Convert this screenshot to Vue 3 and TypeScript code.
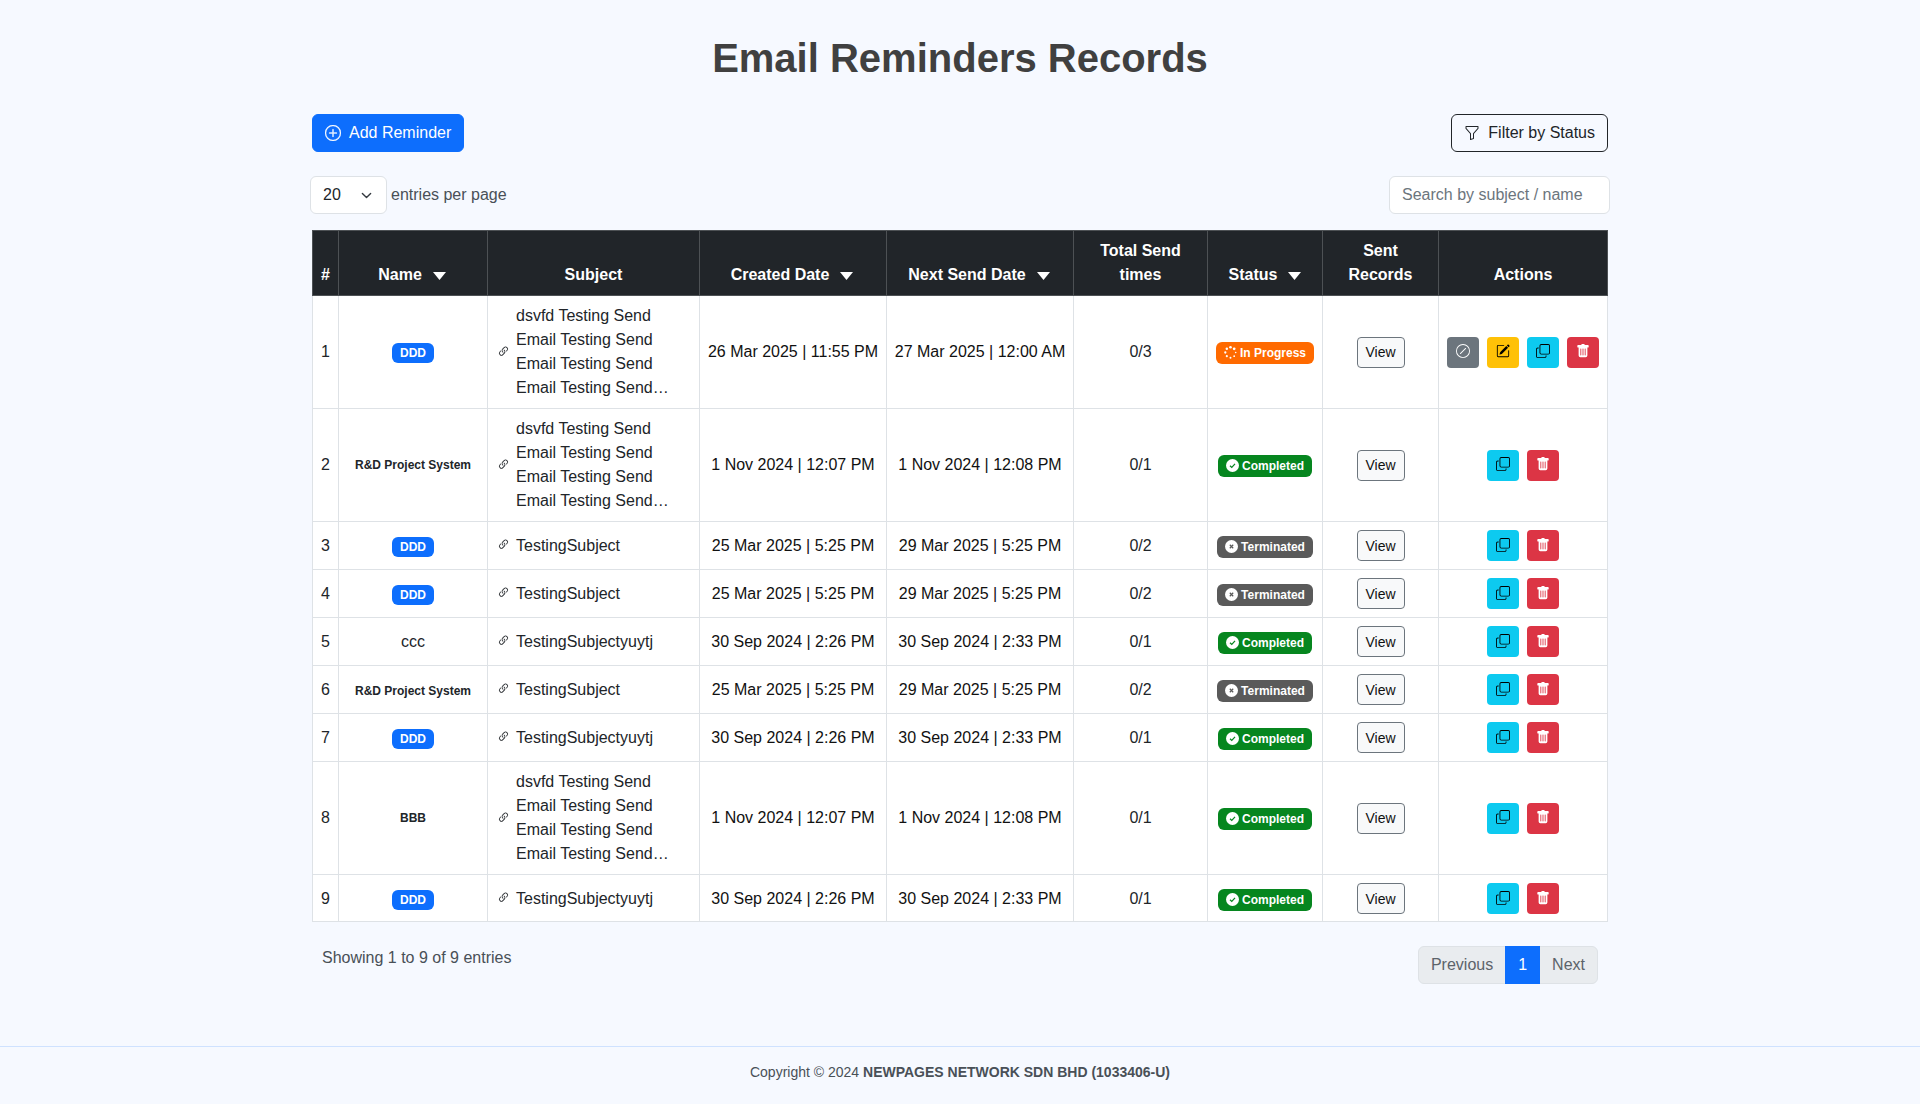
<script setup lang="ts">
type Status = 'progress' | 'completed' | 'terminated'
type NameKind = 'badge' | 'bold' | 'plain'

interface ReminderRow {
  id: number
  name: string
  nameKind: NameKind
  subject: string
  created: string
  next: string
  sent: string
  status: Status
}

const longSubject = 'dsvfd Testing Send Email Testing Send Email Testing Send Email Testing Send…'

const rows: ReminderRow[] = [
  { id: 1, name: 'DDD', nameKind: 'badge', subject: longSubject, created: '26 Mar 2025 | 11:55 PM', next: '27 Mar 2025 | 12:00 AM', sent: '0/3', status: 'progress' },
  { id: 2, name: 'R&D Project System', nameKind: 'bold', subject: longSubject, created: '1 Nov 2024 | 12:07 PM', next: '1 Nov 2024 | 12:08 PM', sent: '0/1', status: 'completed' },
  { id: 3, name: 'DDD', nameKind: 'badge', subject: 'TestingSubject', created: '25 Mar 2025 | 5:25 PM', next: '29 Mar 2025 | 5:25 PM', sent: '0/2', status: 'terminated' },
  { id: 4, name: 'DDD', nameKind: 'badge', subject: 'TestingSubject', created: '25 Mar 2025 | 5:25 PM', next: '29 Mar 2025 | 5:25 PM', sent: '0/2', status: 'terminated' },
  { id: 5, name: 'ccc', nameKind: 'plain', subject: 'TestingSubjectyuytj', created: '30 Sep 2024 | 2:26 PM', next: '30 Sep 2024 | 2:33 PM', sent: '0/1', status: 'completed' },
  { id: 6, name: 'R&D Project System', nameKind: 'bold', subject: 'TestingSubject', created: '25 Mar 2025 | 5:25 PM', next: '29 Mar 2025 | 5:25 PM', sent: '0/2', status: 'terminated' },
  { id: 7, name: 'DDD', nameKind: 'badge', subject: 'TestingSubjectyuytj', created: '30 Sep 2024 | 2:26 PM', next: '30 Sep 2024 | 2:33 PM', sent: '0/1', status: 'completed' },
  { id: 8, name: 'BBB', nameKind: 'bold', subject: longSubject, created: '1 Nov 2024 | 12:07 PM', next: '1 Nov 2024 | 12:08 PM', sent: '0/1', status: 'completed' },
  { id: 9, name: 'DDD', nameKind: 'badge', subject: 'TestingSubjectyuytj', created: '30 Sep 2024 | 2:26 PM', next: '30 Sep 2024 | 2:33 PM', sent: '0/1', status: 'completed' },
]

const statusLabels: Record<Status, string> = {
  progress: 'In Progress',
  completed: 'Completed',
  terminated: 'Terminated',
}

const spinnerDots = [0, 1, 2, 3, 4, 5, 6, 7].map((i) => ({
  cx: 8 + 6.4 * Math.cos((i * Math.PI) / 4),
  cy: 8 + 6.4 * Math.sin((i * Math.PI) / 4),
  r: 1 + i * 0.1,
}))
</script>

<template>
  <div class="page">
    <main class="content">
      <h1 class="title">Email Reminders Records</h1>

      <div class="toolbar">
        <button class="btn btn-add" type="button">
          <svg class="btn-icon" viewBox="0 0 16 16" fill="currentColor" stroke="currentColor" stroke-width="0.3">
            <path d="M8 15A7 7 0 1 1 8 1a7 7 0 0 1 0 14m0 1A8 8 0 1 0 8 0a8 8 0 0 0 0 16" />
            <path d="M8 4a.5.5 0 0 1 .5.5v3h3a.5.5 0 0 1 0 1h-3v3a.5.5 0 0 1-1 0v-3h-3a.5.5 0 0 1 0-1h3v-3A.5.5 0 0 1 8 4" />
          </svg>
          Add Reminder
        </button>
        <button class="btn btn-filter" type="button">
          <svg class="btn-icon" viewBox="0 0 16 16" fill="currentColor">
            <path d="M1.5 1.5A.5.5 0 0 1 2 1h12a.5.5 0 0 1 .5.5v2a.5.5 0 0 1-.128.334L10 8.692V13.5a.5.5 0 0 1-.342.474l-3 1A.5.5 0 0 1 6 14.5V8.692L1.628 3.834A.5.5 0 0 1 1.5 3.5zm1 .5v1.308l4.372 4.858A.5.5 0 0 1 7 8.5v5.306l2-.666V8.5a.5.5 0 0 1 .128-.334L13.5 3.308V2z" />
          </svg>
          Filter by Status
        </button>
      </div>

      <div class="table-controls">
        <label class="entries">
          <span class="select-wrap">
            <select class="entries-select">
              <option>20</option>
            </select>
            <svg class="select-chevron" viewBox="0 0 16 16" fill="none" stroke="#343a40" stroke-width="2" stroke-linecap="round" stroke-linejoin="round">
              <path d="m2 5 6 6 6-6" />
            </svg>
          </span>
          entries per page
        </label>
        <input class="search" type="text" placeholder="Search by subject / name" />
      </div>

      <table class="records">
        <colgroup>
          <col style="width: 26px" />
          <col style="width: 149px" />
          <col style="width: 212px" />
          <col style="width: 187px" />
          <col style="width: 187px" />
          <col style="width: 134px" />
          <col style="width: 115px" />
          <col style="width: 116px" />
          <col style="width: 169px" />
        </colgroup>
        <thead>
          <tr>
            <th class="num-head">#</th>
            <th>Name<svg class="sort" viewBox="0 0 13 8"><path d="M0 0h13L6.5 8z" /></svg></th>
            <th>Subject</th>
            <th>Created Date<svg class="sort" viewBox="0 0 13 8"><path d="M0 0h13L6.5 8z" /></svg></th>
            <th>Next Send Date<svg class="sort" viewBox="0 0 13 8"><path d="M0 0h13L6.5 8z" /></svg></th>
            <th>Total Send times</th>
            <th class="status-head">Status<svg class="sort" viewBox="0 0 13 8"><path d="M0 0h13L6.5 8z" /></svg></th>
            <th>Sent Records</th>
            <th>Actions</th>
          </tr>
        </thead>
        <tbody>
          <tr v-for="row in rows" :key="row.id" :class="{ 'row-short': row.subject !== longSubject }">
            <td>{{ row.id }}</td>
            <td>
              <span v-if="row.nameKind === 'badge'" class="name-badge">{{ row.name }}</span>
              <span v-else-if="row.nameKind === 'bold'" class="name-bold">{{ row.name }}</span>
              <template v-else>{{ row.name }}</template>
            </td>
            <td class="subject-cell">
              <div class="subject">
                <svg class="link-icon" viewBox="0 0 16 16" fill="currentColor">
                  <path d="M4.715 6.542 3.343 7.914a3 3 0 1 0 4.243 4.243l1.828-1.829A3 3 0 0 0 8.586 5.5L8 6.086a1 1 0 0 0-.154.199 2 2 0 0 1 .861 3.337L6.88 11.45a2 2 0 1 1-2.83-2.83l.793-.792a4 4 0 0 1-.128-1.287z" />
                  <path d="M6.586 4.672A3 3 0 0 0 7.414 9.5l.775-.776a2 2 0 0 1-.896-3.346L9.12 3.55a2 2 0 1 1 2.83 2.83l-.793.792c.112.42.155.855.128 1.287l1.372-1.372a3 3 0 1 0-4.243-4.243z" />
                </svg>
                <span class="subject-text">{{ row.subject }}</span>
              </div>
            </td>
            <td class="date">{{ row.created }}</td>
            <td class="date">{{ row.next }}</td>
            <td class="sent">{{ row.sent }}</td>
            <td>
              <span class="status" :class="`status-${row.status}`">
                <svg v-if="row.status === 'progress'" class="status-icon" viewBox="0 0 16 16" fill="currentColor">
                  <circle v-for="(dot, i) in spinnerDots" :key="i" :cx="dot.cx" :cy="dot.cy" :r="dot.r" />
                </svg>
                <svg v-else-if="row.status === 'completed'" class="status-icon" viewBox="0 0 16 16">
                  <circle cx="8" cy="8" r="8" fill="#fff" />
                  <path d="M4.9 8.3 7.1 10.4 11.1 6" fill="none" stroke="#06861f" stroke-width="1.5" />
                </svg>
                <svg v-else class="status-icon" viewBox="0 0 16 16">
                  <circle cx="8" cy="8" r="8" fill="#fff" />
                  <path d="M5.9 5.9 10.1 10.1M10.1 5.9 5.9 10.1" fill="none" stroke="#5a5a5a" stroke-width="1.5" />
                </svg>
                <span class="status-label">{{ statusLabels[row.status] }}</span>
              </span>
            </td>
            <td><button class="view-btn" type="button">View</button></td>
            <td>
              <div class="actions">
                <template v-if="row.status === 'progress'">
                  <button class="action action-stop" type="button">
                    <svg viewBox="0 0 16 16" fill="currentColor">
                      <path d="M8 15A7 7 0 1 1 8 1a7 7 0 0 1 0 14m0 1A8 8 0 1 0 8 0a8 8 0 0 0 0 16" />
                      <path d="M11.354 4.646a.5.5 0 0 0-.708 0l-6 6a.5.5 0 0 0 .708.708l6-6a.5.5 0 0 0 0-.708" />
                    </svg>
                  </button>
                  <button class="action action-edit" type="button">
                    <svg viewBox="0 0 16 16" fill="currentColor">
                      <path d="M15.502 1.94a.5.5 0 0 1 0 .706L14.459 3.69l-2-2L13.502.646a.5.5 0 0 1 .707 0l1.293 1.293zm-1.75 2.456-2-2L4.939 9.21a.5.5 0 0 0-.121.196l-.805 2.414a.25.25 0 0 0 .316.316l2.414-.805a.5.5 0 0 0 .196-.12l6.813-6.814z" />
                      <path d="M1 13.5A1.5 1.5 0 0 0 2.5 15h11a1.5 1.5 0 0 0 1.5-1.5v-6a.5.5 0 0 0-1 0v6a.5.5 0 0 1-.5.5h-11a.5.5 0 0 1-.5-.5v-11a.5.5 0 0 1 .5-.5H9a.5.5 0 0 0 0-1H2.5A1.5 1.5 0 0 0 1 2.5z" />
                    </svg>
                  </button>
                </template>
                <button class="action action-copy" type="button">
                  <svg viewBox="0 0 16 16" fill="currentColor">
                    <path fill-rule="evenodd" d="M4 2a2 2 0 0 1 2-2h8a2 2 0 0 1 2 2v8a2 2 0 0 1-2 2H6a2 2 0 0 1-2-2zm2-1a1 1 0 0 0-1 1v8a1 1 0 0 0 1 1h8a1 1 0 0 0 1-1V2a1 1 0 0 0-1-1zM2 5a1 1 0 0 0-1 1v8a1 1 0 0 0 1 1h8a1 1 0 0 0 1-1v-1h1v1a2 2 0 0 1-2 2H2a2 2 0 0 1-2-2V6a2 2 0 0 1 2-2h1v1z" />
                  </svg>
                </button>
                <button class="action action-delete" type="button">
                  <svg viewBox="0 0 16 16" fill="currentColor">
                    <path d="M2.5 1a1 1 0 0 0-1 1v1a1 1 0 0 0 1 1H3v9a2 2 0 0 0 2 2h6a2 2 0 0 0 2-2V4h.5a1 1 0 0 0 1-1V2a1 1 0 0 0-1-1H10a1 1 0 0 0-1-1H7a1 1 0 0 0-1 1zm3 4a.5.5 0 0 1 .5.5v7a.5.5 0 0 1-1 0v-7a.5.5 0 0 1 .5-.5M8 5a.5.5 0 0 1 .5.5v7a.5.5 0 0 1-1 0v-7A.5.5 0 0 1 8 5m3 .5v7a.5.5 0 0 1-1 0v-7a.5.5 0 0 1 1 0" />
                  </svg>
                </button>
              </div>
            </td>
          </tr>
        </tbody>
      </table>

      <div class="table-footer">
        <div class="info">Showing 1 to 9 of 9 entries</div>
        <nav class="pagination">
          <a class="page-link page-prev">Previous</a>
          <a class="page-link page-active">1</a>
          <a class="page-link page-next">Next</a>
        </nav>
      </div>
    </main>

    <footer class="footer">
      Copyright © 2024 <strong>NEWPAGES NETWORK SDN BHD (1033406-U)</strong>
    </footer>
  </div>
</template>

<style>
html,
body {
  margin: 0;
  background: #f6f9ff;
}
</style>

<style scoped>
.page {
  display: flex;
  flex-direction: column;
  min-height: 100vh;
  box-sizing: border-box;
  font-family: 'Liberation Sans', Arial, sans-serif;
  font-size: 16px;
  line-height: 24px;
  color: #212529;
}

.content {
  width: 1296px;
  margin: 0 auto;
  padding-top: 34px;
}

.title {
  margin: 0 0 32px;
  font-size: 40px;
  line-height: 48px;
  font-weight: 700;
  text-align: center;
  color: #404040;
}

.toolbar {
  display: flex;
  justify-content: space-between;
  margin-bottom: 24px;
}

.btn {
  display: inline-flex;
  align-items: center;
  height: 38px;
  box-sizing: border-box;
  padding: 0 12px;
  border: 1px solid transparent;
  border-radius: 6px;
  font: inherit;
  cursor: pointer;
}

.btn-icon {
  width: 16px;
  height: 16px;
  margin-right: 8px;
}

.btn-add {
  background: #0d6efd;
  border-color: #0d6efd;
  color: #fff;
}

.btn-filter {
  background: transparent;
  border-color: #212529;
  color: #212529;
}

.table-controls {
  display: flex;
  justify-content: space-between;
  align-items: center;
  margin: 0 -2px 16px -2px;
}

.entries {
  display: flex;
  align-items: center;
  gap: 4px;
  color: #495057;
}

.select-wrap {
  position: relative;
  display: block;
}

.entries-select {
  display: block;
  width: 77px;
  height: 38px;
  box-sizing: border-box;
  padding: 0 12px;
  border: 1px solid #dee2e6;
  border-radius: 6px;
  background: #fff;
  font: inherit;
  color: #212529;
  appearance: none;
}

.select-chevron {
  position: absolute;
  top: 14px;
  right: 15px;
  width: 11px;
  height: 11px;
  pointer-events: none;
}

.search {
  width: 221px;
  height: 38px;
  box-sizing: border-box;
  padding: 0 12px;
  border: 1px solid #dee2e6;
  border-radius: 6px;
  background: #fff;
  font: inherit;
  color: #212529;
}

.search::placeholder {
  color: #6c757d;
  opacity: 1;
}

.records {
  width: 1295px;
  table-layout: fixed;
  border-collapse: collapse;
  background: #fff;
}

.records th,
.records td {
  padding: 8px;
  text-align: center;
}

.records th {
  vertical-align: bottom;
  background: #212529;
  border: 1px solid #4d5154;
  color: #fff;
  font-weight: 700;
}

.records th.num-head {
  padding: 8px 0;
}

.records td {
  vertical-align: middle;
  border: 1px solid #dee2e6;
  color: #212529;
}

.records td:first-child {
  padding: 8px 0;
}

.records .date {
  padding: 8px 0;
  color: #111;
}

.records tbody tr:last-child td {
  padding-bottom: 7px;
}

.sort {
  width: 13px;
  height: 8px;
  margin: 0 2px 0 11px;
  fill: #fff;
}

.status-head .sort {
  margin-right: 0;
}

.name-badge {
  display: inline-block;
  padding: 4px 8px;
  border-radius: 6px;
  background: #0d6efd;
  color: #fff;
  font-size: 12px;
  font-weight: 700;
  line-height: 12px;
  vertical-align: middle;
}

.name-bold {
  display: inline-block;
  font-size: 12px;
  font-weight: 700;
  vertical-align: middle;
}

.row-short .name-badge,
.row-short .name-bold,
.row-short .status {
  margin-top: 2px;
}

.subject {
  display: flex;
  align-items: center;
  gap: 6px;
  text-align: left;
}

.records .subject-cell {
  padding: 8px 8px 8px 9px;
}

.link-icon {
  flex: none;
  width: 13px;
  height: 13px;
  margin-top: -2px;
}

.subject-text {
  display: block;
  width: 160px;
}

.status {
  display: inline-flex;
  align-items: center;
  gap: 3px;
  height: 22px;
  box-sizing: border-box;
  padding: 0 8px;
  border-radius: 6px;
  color: #fff;
  font-size: 12px;
  font-weight: 700;
  line-height: 12px;
  white-space: nowrap;
  vertical-align: middle;
}

.status-icon {
  flex: none;
  width: 13px;
  height: 13px;
}

.status-progress {
  background: #ff6a00;
}

.status-completed {
  background: #06861f;
}

.status-terminated {
  background: #5a5a5a;
}

.view-btn {
  display: block;
  width: 48px;
  height: 31px;
  box-sizing: border-box;
  margin: 0 auto;
  padding: 0;
  border: 1px solid #6c757d;
  border-radius: 4px;
  background: #f8f9fa;
  color: #111;
  font: inherit;
  font-size: 14px;
}

.actions {
  display: flex;
  justify-content: center;
  gap: 8px;
}

.action {
  display: flex;
  align-items: center;
  justify-content: center;
  width: 32px;
  height: 31px;
  padding: 0;
  border: none;
  border-radius: 4px;
}

.action svg {
  width: 14px;
  height: 14px;
  margin-bottom: 3px;
}

.row-short .action svg {
  margin-bottom: 1px;
}

.action-stop {
  background: #6c757d;
  color: #fff;
}

.action-edit {
  background: #ffc107;
  color: #000;
}

.action-copy {
  background: #0dcaf0;
  color: #000;
}

.action-delete {
  background: #dc3545;
  color: #fff;
}

.table-footer {
  display: flex;
  justify-content: space-between;
  align-items: flex-start;
  margin-top: 24px;
  padding: 0 10px;
}

.info {
  color: #495057;
}

.pagination {
  display: flex;
}

.page-link {
  display: block;
  height: 38px;
  box-sizing: border-box;
  padding: 6px 12px;
  border: 1px solid #dee2e6;
  background: #e9ecef;
  color: #5c636a;
}

.page-prev {
  border-radius: 6px 0 0 6px;
}

.page-next {
  margin-left: -1px;
  border-radius: 0 6px 6px 0;
}

.page-active {
  margin-left: -1px;
  border-color: #0d6efd;
  background: #0d6efd;
  color: #fff;
  position: relative;
}

.footer {
  margin-top: auto;
  height: 58px;
  box-sizing: border-box;
  padding-top: 15px;
  border-top: 1px solid #cfe2ff;
  font-size: 14px;
  line-height: 21px;
  text-align: center;
  color: #495057;
}
</style>
